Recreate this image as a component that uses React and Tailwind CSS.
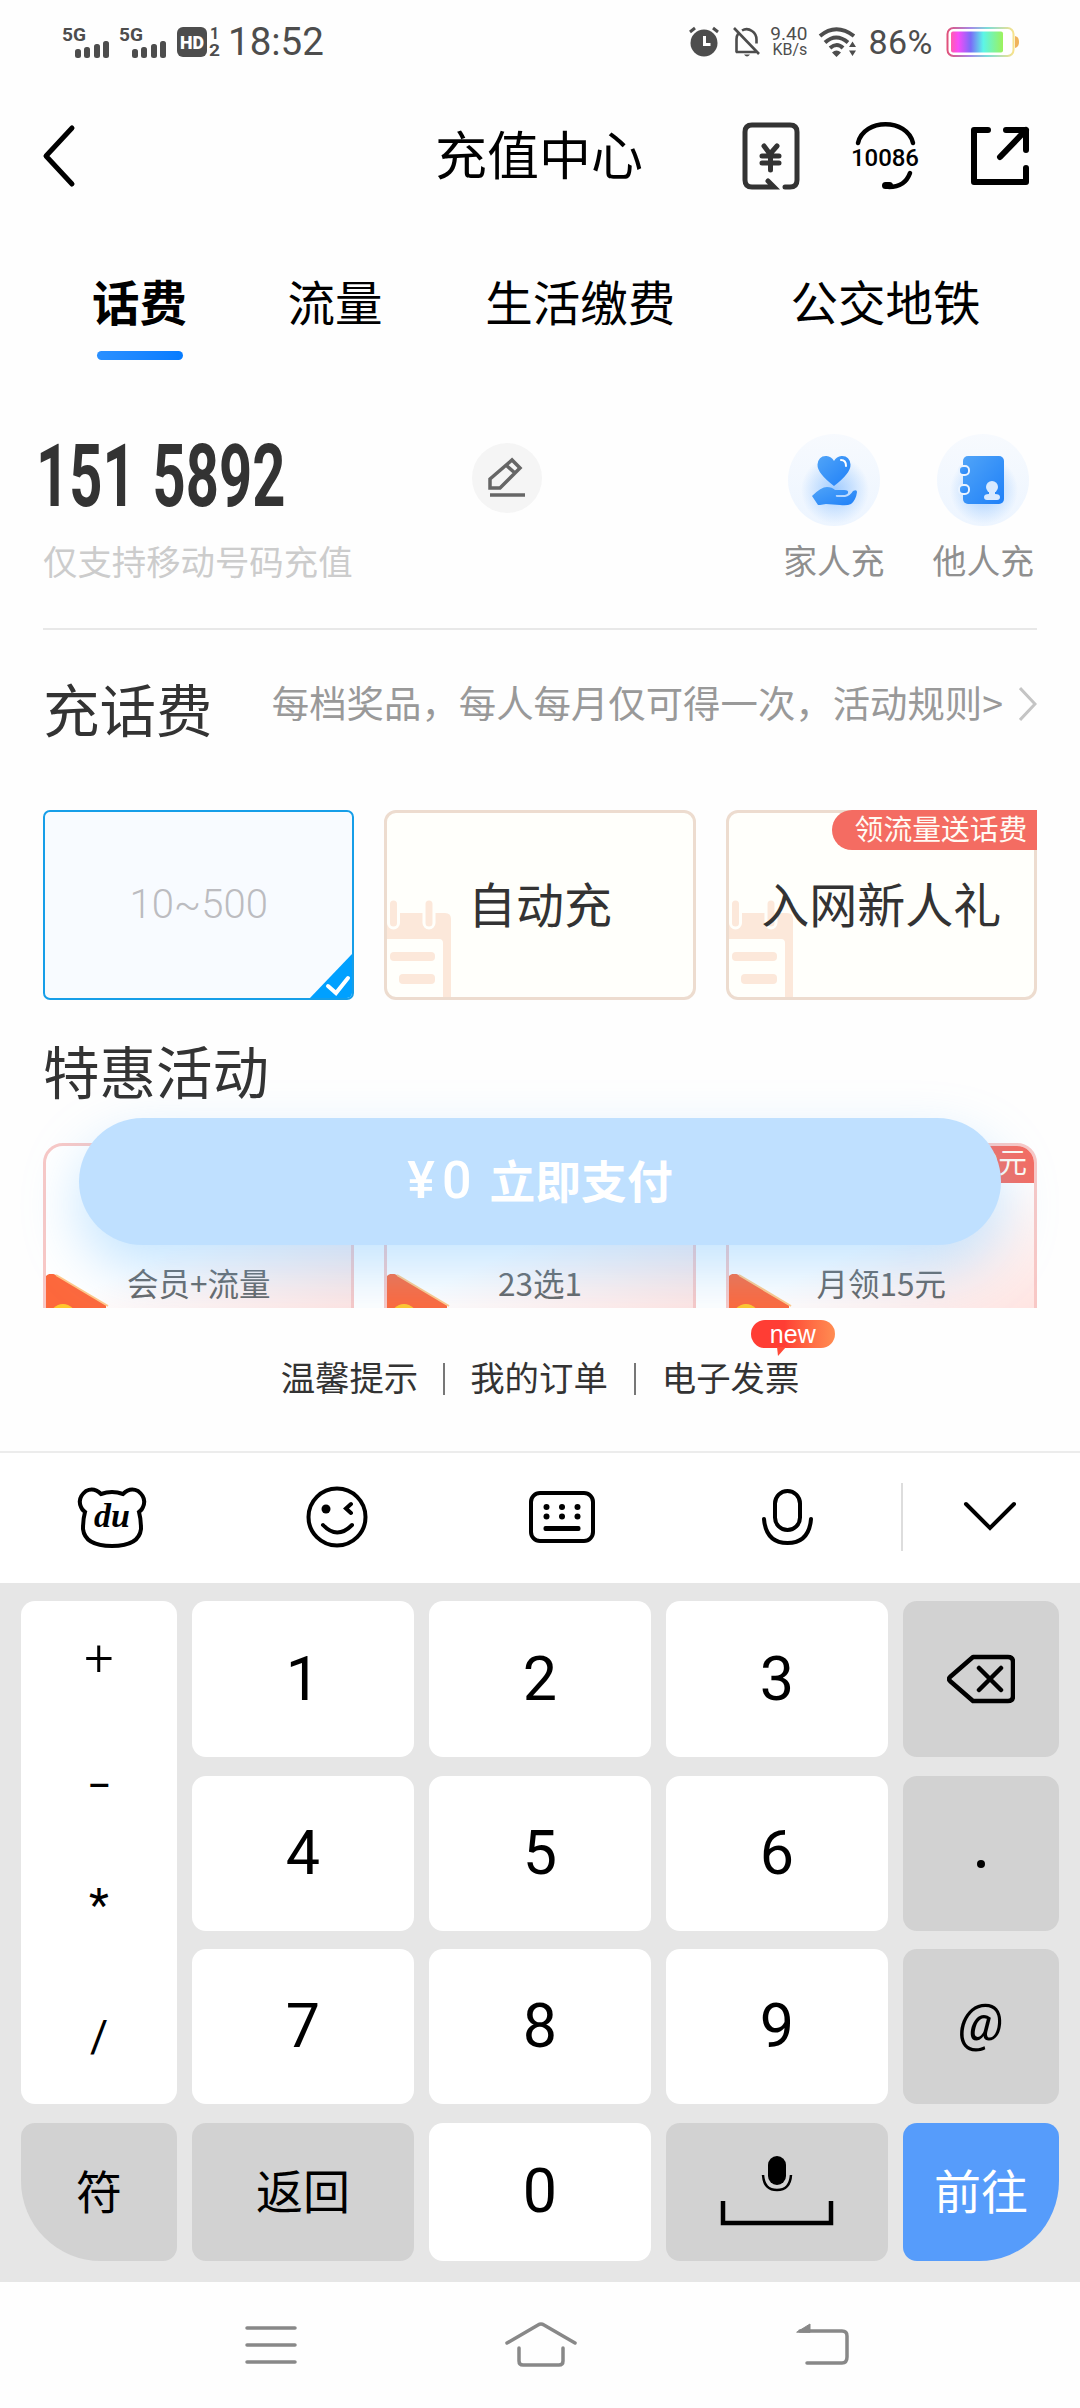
const tabs = [
  { name: "话费", width: "w-[196px]", active: true },
  { name: "流量", width: "w-[198px]" },
  { name: "生活缴费", width: "w-[306px]" },
  { name: "公交地铁", width: "w-[290px]" },
];

const offers = [
  { title: "会员+流量" },
  { title: "23选1" },
  { title: "月领15元", badge: "最高30元" },
];

export default function App() {
  return (
    <div className="flex h-[2408px] w-[1080px] flex-col overflow-hidden bg-[#fefefe] font-['Noto_Sans_CJK_SC',sans-serif] leading-none text-black">
      <StatusBar />
      <Header />
      <Tabs />
      <PhoneNumber />
      <Recharge />
      <Offers />
      <FooterLinks />
      <Toolbar />
      <Keyboard />
      <NavBar />
    </div>
  );
}

function Signal() {
  return (
    <svg width="50" height="36" viewBox="0 -2 50 36" fill="#4d4d4d" className="mr-[7px] overflow-visible">
      <text x="0" y="14.500" fontSize="19" fontWeight="700" fontFamily="Roboto, sans-serif" textLength="24" lengthAdjust="spacingAndGlyphs">5G</text>
      <rect x="13" y="23" width="6" height="9" rx="2.5" />
      <rect x="22" y="21" width="6" height="11" rx="2.5" />
      <rect x="32" y="18" width="6" height="14" rx="2.5" />
      <rect x="41" y="15" width="6" height="17" rx="2.5" />
    </svg>
  );
}

function StatusBar() {
  return (
    <div className="flex h-[84px] items-center justify-between pl-[62px] pr-[60px] font-['Roboto',sans-serif] text-[#4d4d4d]">
      <div className="flex items-center">
        <Signal />
        <Signal />
        <svg width="44" height="34" viewBox="0 0 44 34" fill="#4d4d4d">
          <rect x="1" y="2" width="30" height="30" rx="6" />
          <text x="4" y="24" fontSize="19" fontWeight="900" fill="#fff" textLength="24" lengthAdjust="spacingAndGlyphs">HD</text>
          <text x="34" y="14" fontSize="16" fontWeight="700">1</text>
          <text x="33" y="31" fontSize="16" fontWeight="700" textLength="11" lengthAdjust="spacingAndGlyphs">2</text>
        </svg>
        <span className="ml-[8px] text-[38.5px]">18:52</span>
      </div>
      <div className="flex items-center">
        <svg width="30" height="32" viewBox="0 0 30 32" fill="none" stroke="#4d4d4d">
          <circle cx="15" cy="17" r="13.5" fill="#4d4d4d" stroke="none" />
          <path d="M1 6l5-4M29 6l-5-4" strokeWidth="3" />
          <path d="M15.500 10v8.500h6" stroke="#fff" strokeWidth="3" />
        </svg>
        <svg width="28" height="32" viewBox="0 0 28 32" fill="none" stroke="#4d4d4d" strokeWidth="2.600" className="ml-[14px]">
          <path d="M1 2l25 26M3.500 26.500V13q0-3 1.500-5M3 26h20M9 4.500q5-3 10 .5 4.500 3 4.500 8.500v4" />
          <path d="M11 28.500h6q-3 4-6 0z" fill="#4d4d4d" stroke="none" />
        </svg>
        <div className="ml-[7px] flex w-[39px] flex-col items-end text-[19px] leading-[16px]">
          <span>9.40</span>
          <span className="text-[16px]">KB/s</span>
        </div>
        <svg width="40" height="32" viewBox="0 0 40 32" fill="none" stroke="#4d4d4d" strokeWidth="4" className="ml-[11px]">
          <path d="M2 10q16-13.500 34 0M7 16.500q11-10 23 0M12 22q7-6 13 0" />
          <path d="M14 26.500q4.500-4 9 0L18.500 31zM31 21h7l-3.500-5.500zM31 24.500h7L34.500 30z" fill="#4d4d4d" stroke="none" />
        </svg>
        <span className="ml-[10px] text-[34px] tracking-[.5px]">86%</span>
        <svg width="74" height="32" viewBox="0 0 74 32" className="ml-[13px]">
          <defs>
            <linearGradient id="battery">
              <stop offset="0" stopColor="#ff5cad" />
              <stop offset=".14" stopColor="#f84cf8" />
              <stop offset=".38" stopColor="#7a6cf8" />
              <stop offset=".62" stopColor="#5cf5e8" />
              <stop offset="1" stopColor="#9cf25c" />
            </linearGradient>
            <linearGradient id="shell">
              <stop offset="0" stopColor="#e0527c" />
              <stop offset=".35" stopColor="#a58ae8" />
              <stop offset=".6" stopColor="#7cdcd8" />
              <stop offset="1" stopColor="#f7e28c" />
            </linearGradient>
          </defs>
          <rect x="1.500" y="2" width="66" height="28" rx="6" fill="#fff" stroke="url(#shell)" strokeWidth="2" />
          <rect x="5" y="5.500" width="52" height="21" rx="2" fill="url(#battery)" />
          <path d="M69 10q4 1 4 6t-4 6z" fill="#f0b35c" />
        </svg>
      </div>
    </div>
  );
}

function Header() {
  return (
    <div className="flex h-[144px] items-center pl-[42px] pr-[48px]">
      <svg width="36" height="64" viewBox="0 0 36 64" fill="none" stroke="#000" strokeWidth="5" strokeLinecap="round" strokeLinejoin="round">
        <path d="M30 4L4 32l26 28" />
      </svg>
      <h1 className="ml-[357px] -mt-[7px] w-[208px] whitespace-nowrap text-[52px]">充值中心</h1>
      <svg width="60" height="70" viewBox="0 0 60 70" fill="none" stroke="#333" strokeWidth="5" strokeLinecap="round" className="ml-[98px]">
        <path d="M44 66h5q7 0 7-7V11q0-7-7-7H11q-7 0-7 7v48q0 7 7 7h22l-6-6" />
        <path d="M23 25l6 8 7-8M21 35h17M21 42h17M29.500 34v15" />
      </svg>
      <svg width="70" height="70" viewBox="0 0 70 70" fill="none" stroke="#000" strokeWidth="4.500" strokeLinecap="round" className="ml-[50px]">
        <path d="M7 22C13 -3 56 -3 62 22M59 52Q54 66 38 66" />
        <rect x="31" y="61" width="11" height="7" rx="3.500" fill="#000" stroke="none" />
        <text x="0" y="44.500" fontSize="24" fontWeight="500" fontFamily="Roboto, sans-serif" fill="#000" stroke="none" textLength="68">10086</text>
      </svg>
      <svg width="60" height="60" viewBox="0 0 60 60" fill="none" stroke="#000" strokeWidth="6" strokeLinecap="round" strokeLinejoin="round" className="ml-[49px]">
        <path d="M18 4H4v52h52V42M36 4h20v20M56 4L30 31" />
      </svg>
    </div>
  );
}

function Tabs() {
  return (
    <div className="flex h-[172px] pl-[92px] pt-[49px] text-[47.500px]">
      {tabs.map(tab => (
        <div key={tab.name} className={`flex flex-col items-start whitespace-nowrap ${tab.width}`}>
          <span className={tab.active ? "font-bold" : ""}>{tab.name}</span>
          {tab.active && <div className="ml-[5px] mt-[26px] h-[9px] w-[86px] rounded-full bg-linear-to-r from-[#2a90ff] to-[#067cff]" />}
        </div>
      ))}
    </div>
  );
}

function PhoneNumber() {
  return (
    <div className="mx-[43px] flex h-[230px] justify-between border-b-2 border-[#e8e8e8] pt-[34px]">
      <div className="w-[500px]">
        <div className="flex h-[88px] items-center justify-between">
          <span className="ml-[-7px] -mt-[3px] inline-block w-[370px] origin-left scale-x-[.665] whitespace-nowrap font-['Roboto',sans-serif] text-[87px] font-bold text-[#333] [word-spacing:4px]">151 5892</span>
          <div className="mr-[1px] flex h-[70px] w-[70px] shrink-0 items-center justify-center rounded-full bg-[#f5f5f5]">
            <svg width="40" height="42" viewBox="0 0 40 42" fill="none" stroke="#666" strokeWidth="3.500">
              <path d="M3 31v-9L25 3l8 8-20 20zM20 9l8 7" />
              <path d="M3 38h35" />
            </svg>
          </div>
        </div>
        <p className="mt-[21px] text-[34.400px] text-[#ccc]">仅支持移动号码充值</p>
      </div>
      <div className="mr-[3px] flex gap-[48px] text-[33.800px] text-[#8f8f8f]">
        <div className="flex flex-col items-center">
          <Halo>
            <path d="M46 52q-17-13-16.500-21.500 1-9 9-8.500 5 .5 7.500 5 2.500-4.500 7.500-5 8-.5 9 8.500Q63 39 46 52z" />
            <path d="M24 62q9-9 15-9 5 0 8 3h9q5 0 4 3-1 2-5 2h-7q-1 2 2 2h7q5-1 8-6 4-2 4 1-1 8-6 12-4 2-11 1l-14-1-6 1-2 0z" />
            <path d="M53 26q5 0 5 6" fill="none" stroke="#fff" strokeWidth="2" strokeLinecap="round" />
          </Halo>
          <span className="mt-[17px]">家人充</span>
        </div>
        <div className="flex flex-col items-center">
          <Halo>
            <rect x="26" y="22" width="41" height="48" rx="5" />
            <rect x="22" y="32" width="10" height="9" rx="4" stroke="#e9f3ff" strokeWidth="2" />
            <rect x="22" y="51" width="10" height="9" rx="4" stroke="#e9f3ff" strokeWidth="2" />
            <g fill="#d9eaff">
              <circle cx="55" cy="53" r="6" />
              <path d="M52 57h6v3q5 0 5 3t-3 3H50q-3 0-3-3t5-3z" />
            </g>
          </Halo>
          <span className="mt-[17px]">他人充</span>
        </div>
      </div>
    </div>
  );
}

// Pale round backdrop with a soft glow under the icon
function Halo({ children }) {
  return (
    <div className="h-[92px] w-[92px] rounded-full bg-linear-to-b from-[#f7fafe] to-[#edf5ff]">
      <svg width="92" height="92" viewBox="0 0 92 92" fill="url(#haloBlue)">
        <defs>
          <linearGradient id="haloBlue" x1="0" y1="0" x2="1" y2="1">
            <stop offset="0" stopColor="#50a4f8" />
            <stop offset="1" stopColor="#1f80f8" />
          </linearGradient>
          <radialGradient id="haloGlow">
            <stop offset="0" stopColor="#9fcbff" />
            <stop offset="1" stopColor="#9fcbff" stopOpacity="0" />
          </radialGradient>
        </defs>
        <circle cx="47" cy="56" r="34" fill="url(#haloGlow)" />
        {children}
      </svg>
    </div>
  );
}

function Recharge() {
  return (
    <div className="h-[401px] px-[43px] pt-[50px]">
      <div className="flex h-[60px] items-center justify-between">
        <h2 className="-mt-[5px] text-[56.500px] text-[#333]">充话费</h2>
        <div className="-mt-[15px] flex items-center text-[37.400px] text-[#999]">
          <span>每档奖品，每人每月仅可得一次，活动规则&gt;</span>
          <svg width="18" height="36" viewBox="0 0 18 36" fill="none" stroke="#c4c4c4" strokeWidth="3" className="ml-[16px] mt-[3px]">
            <path d="M1 2l15 16L1 34" />
          </svg>
        </div>
      </div>
      <div className="mt-[70px] grid grid-cols-3 gap-[30px]">
        <div className="relative flex h-[190px] items-center justify-center overflow-hidden rounded-[7px] border-2 border-[#169ee8] bg-[#f8fbff] font-['Roboto',sans-serif] text-[40px] font-light text-[#bcbcc0]">
          10~500
          <svg width="44" height="46" viewBox="0 0 44 46" className="absolute -bottom-[1px] -right-[1px]">
            <path d="M44 0v46H0z" fill="#00a0ff" />
            <path d="M19 33l8 7 12-15" fill="none" stroke="#fff" strokeWidth="4" strokeLinecap="round" />
          </svg>
        </div>
        <GiftCard title="自动充" />
        <GiftCard title="入网新人礼" badge="领流量送话费" />
      </div>
    </div>
  );
}

function GiftCard({ title, badge }) {
  return (
    <div className="relative flex h-[190px] items-center justify-center rounded-[12px] border-[3px] border-[#eddccf] bg-[#fffffb] text-[48px] text-[#333]">
      <svg width="66" height="98" viewBox="0 0 66 98" fill="#fce8da" className="absolute bottom-0 left-0">
        <path d="M0 14h58q6 0 6 6v78h-8V44q0-4-4-4H0z" />
        <g stroke="#fffffb" strokeWidth="3">
          <rect x="1.500" y="0" width="10" height="29" rx="5" />
          <rect x="37" y="0" width="10" height="29" rx="5" />
        </g>
        <rect x="3" y="53" width="45" height="9" rx="4" />
        <rect x="12" y="75" width="36" height="10" rx="4" />
      </svg>
      <span className="relative -mt-[6px] whitespace-nowrap">{title}</span>
      {badge && (
        <span className="absolute -right-[3px] -top-[3px] flex h-[40px] w-[205px] items-center justify-center rounded-l-full rounded-tr-[6px] bg-[#f46c62] pb-[4px] pl-[13px] text-[28.800px] text-[#fffbf4]">
          {badge}
        </span>
      )}
    </div>
  );
}

function Offers() {
  return (
    <div className="relative h-[277px] overflow-hidden px-[43px]">
      <h2 className="text-[56.500px] leading-[76px] text-[#333]">特惠活动</h2>
      <div className="mt-[36px] grid grid-cols-3 gap-[30px]">
        {offers.map(offer => (
          <OfferCard key={offer.title} {...offer} />
        ))}
      </div>
      <button className="absolute left-[79px] top-[87px] flex h-[127px] w-[922px] items-center justify-center rounded-full bg-[#bfe0ff] pb-[3px] text-[45.800px] font-bold text-white shadow-[0_24px_56px_rgba(110,190,255,.4)]">
        <span className="mr-[11px] mt-[2px] font-['Roboto',sans-serif] text-[52px] font-medium tracking-[7px]">¥0</span>
        立即支付
      </button>
    </div>
  );
}

function OfferCard({ title, badge }) {
  return (
    <div className="relative flex h-[190px] justify-center overflow-hidden rounded-[20px] rounded-b-none border-[3px] border-[#f8c8c6] bg-linear-[155deg,#fff_50%,#ffe0dd] pt-[121px] text-[31.500px] text-[#666]">
      {title}
      <svg width="66" height="60" viewBox="0 0 66 60" className="absolute left-0 top-[128px]">
        <path d="M0 2q4-4 10-1l50 30v29H0z" fill="#fd683c" />
        <path d="M10 1l52 31" stroke="#ffc98a" strokeWidth="2" />
        <circle cx="17" cy="43" r="13" fill="#ffc72e" />
      </svg>
      {badge && (
        <span className="absolute -right-[3px] -top-[3px] flex h-[40px] w-[165px] items-center justify-end rounded-l-full rounded-tr-[6px] bg-[#f46c62] pb-[4px] pr-[10px] text-[28.800px] text-[#fffbf4]">
          {badge}
        </span>
      )}
    </div>
  );
}

function FooterLinks() {
  return (
    <div className="flex h-[143px] justify-center pt-[51px] text-[34.400px] text-[#333]">
      <span>温馨提示</span>
      <div className="mx-[25px] mt-[4px] h-[32px] w-[2px] bg-[#777]" />
      <span>我的订单</span>
      <div className="mx-[26px] mt-[4px] h-[32px] w-[2px] bg-[#777]" />
      <div className="relative">
        电子发票
        <div className="absolute -top-[39px] left-[89px] flex h-[28px] w-[84px] items-center justify-center rounded-full bg-linear-to-r from-[#ff3d34] from-40% to-[#ff8c52] font-['Liberation_Sans',sans-serif] text-[25px] text-white">
          new
          <svg width="9" height="9" viewBox="0 0 9 9" className="absolute left-[26px] top-[27px]">
            <path d="M0 0h9L1 9z" fill="#ff4a38" />
          </svg>
        </div>
      </div>
    </div>
  );
}

function Toolbar() {
  return (
    <div className="flex h-[132px] items-center border-t-2 border-[#ececec] bg-white pb-[2px]">
      <svg width="70" height="62" viewBox="0 0 70 62" fill="none" stroke="#000" strokeWidth="4" className="ml-[77px]">
        <path d="M24 8Q35 4 46 8 53 1 61 5q9 7 5 16-1 3-4 5 2 7 2 17-2 17-29 17T6 43q0-10 2-17-3-2-4-5Q0 12 9 5q8-4 15 3z" />
        <text x="17" y="41" fontSize="34" fontStyle="italic" fontWeight="700" fontFamily="Liberation Serif, serif" fill="#000" stroke="none" textLength="36" lengthAdjust="spacingAndGlyphs">du</text>
      </svg>
      <svg width="62" height="62" viewBox="0 0 62 62" fill="none" stroke="#000" strokeWidth="4" strokeLinecap="round" className="ml-[159px]">
        <circle cx="31" cy="31" r="28.500" />
        <circle cx="20" cy="23" r="4.500" fill="#000" stroke="none" />
        <path d="M45 18l-5 4.500 5 4.500M17 39q14 15 29 0" />
      </svg>
      <svg width="68" height="54" viewBox="0 0 68 54" className="ml-[160px]">
        <rect x="3" y="3" width="62" height="48" rx="9" fill="none" stroke="#000" strokeWidth="4" />
        <circle cx="18.500" cy="17" r="3" />
        <circle cx="34" cy="17" r="3" />
        <circle cx="49.500" cy="17" r="3" />
        <circle cx="18.500" cy="26.500" r="3" />
        <circle cx="34" cy="26.500" r="3" />
        <circle cx="49.500" cy="26.500" r="3" />
        <rect x="15.500" y="36" width="37" height="5" rx="2" />
      </svg>
      <svg width="54" height="58" viewBox="0 0 54 58" fill="none" stroke="#000" strokeWidth="4" strokeLinecap="round" className="ml-[165px]">
        <rect x="14" y="3" width="25" height="39" rx="12.500" />
        <path d="M3 31q2 24 23.500 24T50 31" />
      </svg>
      <div className="ml-[86px] h-[68px] w-[2px] bg-[#ddd]" />
      <svg width="54" height="32" viewBox="0 0 54 32" fill="none" stroke="#000" strokeWidth="4" strokeLinecap="round" className="ml-[60px]">
        <path d="M3 3l24 24L51 3" />
      </svg>
    </div>
  );
}

function Key({ children, className = "bg-white" }) {
  return <button className={`flex items-center justify-center rounded-[14px] ${className}`}>{children}</button>;
}

function Keyboard() {
  return (
    <div className="h-[699px] bg-[#e6e6e6] px-[21px] pt-[18px]">
      <div className="grid grid-cols-[156px_222px_222px_222px_156px] grid-rows-[156px_155px_155px_138px] gap-x-[15px] gap-y-[18.500px] font-['Roboto',sans-serif] text-[61px]">
        <div className="row-span-3 flex flex-col items-center rounded-[14px] bg-white text-[44px]">
          <span className="mt-[32px] h-[131px] text-[52px] font-light">+</span>
          <span className="h-[118px]">−</span>
          <span className="h-[133px] text-[46px]">*</span>
          <span>/</span>
        </div>
        <Key>1</Key>
        <Key>2</Key>
        <Key>3</Key>
        <Key className="bg-[#d2d2d2]">
          <svg width="68" height="50" viewBox="0 0 68 50" fill="none" stroke="#000" strokeWidth="4.500" strokeLinecap="round" strokeLinejoin="round">
            <path d="M26 3h35q5 0 5 5v34q0 5-5 5H26L3 27q-2-2 0-4zM32 14l22 22M54 14L32 36" />
          </svg>
        </Key>
        <Key>4</Key>
        <Key>5</Key>
        <Key>6</Key>
        <Key className="bg-[#d2d2d2]">
          <div className="mt-[22px] h-[8px] w-[8px] rounded-full bg-black" />
        </Key>
        <Key>7</Key>
        <Key>8</Key>
        <Key>9</Key>
        <Key className="bg-[#d2d2d2] pb-[8px] text-[52px] italic">@</Key>
        <Key className="rounded-bl-[80px] bg-[#d2d2d2] pb-[6px] font-['Noto_Sans_CJK_SC',sans-serif] text-[46px]">符</Key>
        <Key className="bg-[#d2d2d2] pb-[6px] font-['Noto_Sans_CJK_SC',sans-serif] text-[47px]">返回</Key>
        <Key>0</Key>
        <Key className="bg-[#d2d2d2] pb-[2px]">
          <svg width="114" height="72" viewBox="0 0 114 72" fill="none" stroke="#000" strokeWidth="4.500">
            <path d="M3 46v22h108V46" />
            <rect x="48" y="1" width="18" height="29" rx="9" fill="#000" stroke="none" />
            <path d="M43 20q1 15 14 15t14-15" strokeWidth="2.500" />
          </svg>
        </Key>
        <Key className="rounded-br-[80px] bg-[#569cfb] pb-[6px] font-['Noto_Sans_CJK_SC',sans-serif] text-[47px] text-white">前往</Key>
      </div>
    </div>
  );
}

function NavBar() {
  return (
    <div className="flex h-[126px] items-center bg-[#fefefe] pl-[245px] text-[#888]">
      <svg width="52" height="42" viewBox="0 0 52 42" stroke="currentColor" strokeWidth="3.500" strokeLinecap="round">
        <path d="M2 4h48M2 21h48M2 38h48" />
      </svg>
      <svg width="72" height="46" viewBox="0 0 72 46" fill="none" stroke="currentColor" strokeWidth="3.500" strokeLinecap="round" className="ml-[208px]">
        <path d="M2 21L33 3q3-2 6 0l31 18M14 26v13q0 4 4 4h36q4 0 4-4V26" />
      </svg>
      <svg width="54" height="44" viewBox="0 0 54 44" fill="none" stroke="currentColor" strokeWidth="3.500" strokeLinecap="round" className="ml-[219px]">
        <path d="M4 8h42q5 0 5 5v21q0 6-5 6H11" />
        <path d="M1 9L14 1v8z" fill="currentColor" strokeWidth="1" />
      </svg>
    </div>
  );
}
